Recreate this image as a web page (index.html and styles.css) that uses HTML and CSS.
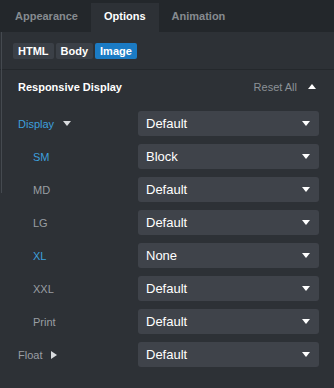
FILE: index.html
```html
<!DOCTYPE html>
<html>
<head>
<meta charset="utf-8">
<link rel="stylesheet" href="styles.css">
</head>
<body>
<div class="panel">
  <div class="edge"></div>
  <div class="tabs">
    <div class="tab">Appearance</div>
    <div class="tab active">Options</div>
    <div class="tab">Animation</div>
  </div>
  <div class="pills">
    <span class="pill">HTML</span>
    <span class="pill">Body</span>
    <span class="pill on">Image</span>
  </div>
  <div class="section">
    <div class="head">
      <span class="title">Responsive Display</span>
      <span class="reset">Reset All <span class="tri up"></span></span>
    </div>
    <div class="rows">
      <div class="row"><span class="label blue">Display <span class="tri down"></span></span><div class="select">Default<span class="tri down w"></span></div></div>
      <div class="row"><span class="label sub blue">SM</span><div class="select">Block<span class="tri down w"></span></div></div>
      <div class="row"><span class="label sub">MD</span><div class="select">Default<span class="tri down w"></span></div></div>
      <div class="row"><span class="label sub">LG</span><div class="select">Default<span class="tri down w"></span></div></div>
      <div class="row"><span class="label sub blue">XL</span><div class="select">None<span class="tri down w"></span></div></div>
      <div class="row"><span class="label sub">XXL</span><div class="select">Default<span class="tri down w"></span></div></div>
      <div class="row"><span class="label sub">Print</span><div class="select">Default<span class="tri down w"></span></div></div>
      <div class="row"><span class="label">Float <span class="tri right"></span></span><div class="select">Default<span class="tri down w"></span></div></div>
    </div>
  </div>
</div>
</body>
</html>
```
FILE: styles.css
```css
* { box-sizing: border-box; }
html, body { margin: 0; padding: 0; }
body {
  background: #2d3136;
  font-family: "Liberation Sans", Arial, sans-serif;
  width: 334px;
  height: 388px;
  overflow: hidden;
}
.panel { position: relative; height: 388px; }
.edge {
  position: absolute;
  left: 1px;
  top: 32px;
  width: 1px;
  height: 161px;
  background: #454a50;
}
.tabs {
  display: flex;
  background: #23272b;
  height: 32px;
  padding: 3px 0 0 2px;
}
.tab {
  padding: 0 13px;
  font-size: 11px;
  font-weight: bold;
  color: #868b90;
  line-height: 27px;
  height: 29px;
}
.tab.active { background: #2d3136; color: #fff; }
.pills {
  display: flex;
  gap: 2px;
  padding: 11px 13px 0;
}
.pill {
  height: 16px;
  line-height: 16px;
  padding: 0 5px;
  font-size: 11px;
  font-weight: bold;
  color: #fff;
  background: #3b4047;
  border-radius: 2px;
}
.pill.on { background: #1b7bc4; }
.section {
  margin-top: 10px;
  border-top: 1px solid #24282c;
  padding: 0 15px 0 18px;
}
.head {
  height: 33px;
  display: flex;
  align-items: center;
  justify-content: space-between;
  padding-right: 3px;
}
.title { font-size: 11px; font-weight: bold; color: #fff; }
.reset { font-size: 11px; color: #8c9196; display: flex; align-items: center; gap: 11px; }
.rows {
  margin-top: 8px;
  display: flex;
  flex-direction: column;
  gap: 8px;
}
.row { display: flex; align-items: center; height: 25px; }
.label {
  width: 120px;
  font-size: 11px;
  color: #999ea3;
  display: flex;
  align-items: center;
  gap: 9px;
}
.label.sub { padding-left: 15px; }
.label.blue { color: #3d9fdc; }
.select {
  flex: 1;
  height: 25px;
  background: #3f434a;
  border-radius: 3px;
  display: flex;
  align-items: center;
  justify-content: space-between;
  padding: 0 9px 0 8px;
  font-size: 13px;
  color: #fff;
}
.tri { display: inline-block; width: 0; height: 0; }
.tri.down {
  border-left: 4px solid transparent;
  border-right: 4px solid transparent;
  border-top: 5px solid #d8dbde;
}
.tri.down.w { border-top-color: #fff; }
.tri.up {
  border-left: 4.5px solid transparent;
  border-right: 4.5px solid transparent;
  border-bottom: 5px solid #fff;
}
.tri.right {
  border-top: 4px solid transparent;
  border-bottom: 4px solid transparent;
  border-left: 6px solid #d8dbde;
}
```
